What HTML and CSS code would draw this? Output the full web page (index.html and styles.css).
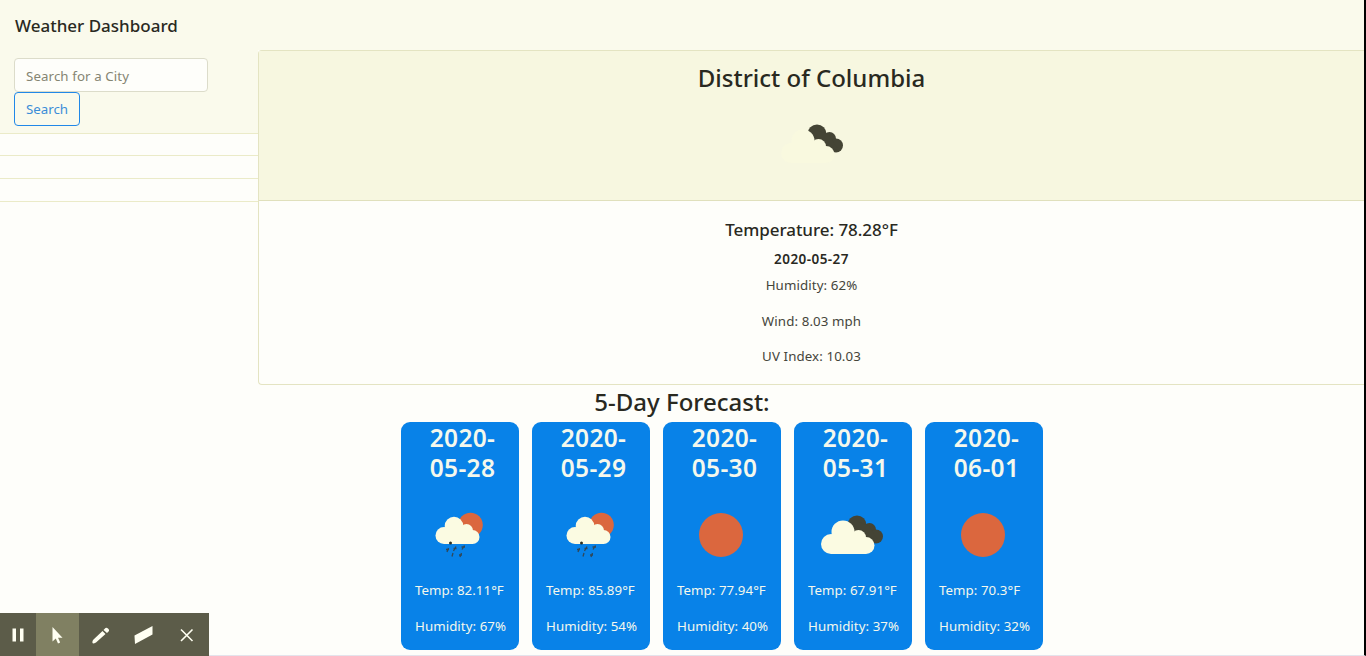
FILE: index.html
```html
<!DOCTYPE html>
<html lang="en">
<head>
<meta charset="utf-8">
<title>Weather Dashboard</title>
<link rel="stylesheet" href="styles.css">
</head>
<body>
<svg class="defs" width="0" height="0">
  <symbol id="clouds" viewBox="0 0 62 40">
    <g class="cloud-dark"><circle cx="36" cy="10" r="9.500"/><circle cx="48.500" cy="14.500" r="6.500"/><circle cx="55" cy="21.500" r="7"/><path d="M36 6l12 5 9 14-7 3-14-6z"/></g>
    <g class="cloud-light"><circle cx="10" cy="29" r="10"/><circle cx="22" cy="17" r="11.500"/><circle cx="37.500" cy="22.500" r="7.500"/><circle cx="45" cy="30.500" r="8.500"/><path d="M10 39V20l12-8 16 8 7 10v9z"/></g>
  </symbol>
  <symbol id="rain" viewBox="0 0 48 46">
    <circle class="sun" cx="35.500" cy="13" r="12.300"/>
    <g class="cloud-light"><circle cx="9" cy="23.500" r="8.500"/><circle cx="19" cy="14" r="9.300"/><circle cx="31.500" cy="18.500" r="6.500"/><circle cx="37.500" cy="25" r="7"/><path d="M9 32V16l10-6 13 7 6 8v7z"/></g>
    <circle class="drop-dot" cx="15.500" cy="31" r="1.500"/>
    <path class="drops" d="M11 37.500h3M13.500 36l-1.500 4M18.500 36.500h3M21 34.500l-2.500 4.500M26.500 35h3.500M29.500 33.500l-2.500 4M18 41l-1 3.500M24 43h3M26.500 41l-1.500 4"/>
  </symbol>
  <symbol id="clear" viewBox="0 0 44 44"><circle class="sun" cx="22" cy="22" r="22"/></symbol>
</svg>
<div class="page">
  <header class="topbar"><h1 class="title">Weather Dashboard</h1></header>
  <div class="content">
    <aside class="sidebar">
      <form class="search">
        <input class="field" type="text" placeholder="Search for a City">
        <button class="search-btn" type="button">Search</button>
      </form>
      <div class="history"></div><div class="history"></div><div class="history"></div>
    </aside>
    <main class="current">
      <div class="current-head">
        <h2 class="city">District of Columbia</h2>
        <svg class="current-icon" viewBox="0 0 62 40"><use href="#clouds"/></svg>
      </div>
      <div class="current-body">
        <h3 class="temperature">Temperature: 78.28°F</h3>
        <div class="date">2020-05-27</div>
        <p class="stat humidity">Humidity: 62%</p>
        <p class="stat wind">Wind: 8.03 mph</p>
        <p class="stat uv">UV Index: 10.03</p>
      </div>
    </main>
  </div>
  <h2 class="forecast-title">5-Day Forecast:</h2>
  <section class="forecast">
    <article class="day"><h3 class="day-date">2020-<br>05-28</h3><div class="day-icon"><svg class="rain"><use href="#rain"/></svg></div><p>Temp: 82.11°F</p><p>Humidity: 67%</p></article>
    <article class="day"><h3 class="day-date">2020-<br>05-29</h3><div class="day-icon"><svg class="rain"><use href="#rain"/></svg></div><p>Temp: 85.89°F</p><p>Humidity: 54%</p></article>
    <article class="day"><h3 class="day-date">2020-<br>05-30</h3><div class="day-icon"><svg class="clear"><use href="#clear"/></svg></div><p>Temp: 77.94°F</p><p>Humidity: 40%</p></article>
    <article class="day"><h3 class="day-date">2020-<br>05-31</h3><div class="day-icon"><svg class="clouds"><use href="#clouds"/></svg></div><p>Temp: 67.91°F</p><p>Humidity: 37%</p></article>
    <article class="day"><h3 class="day-date">2020-<br>06-01</h3><div class="day-icon"><svg class="clear"><use href="#clear"/></svg></div><p>Temp: 70.3°F</p><p>Humidity: 32%</p></article>
  </section>
</div>
<div class="toolbar">
  <svg class="tools" viewBox="0 0 209 43">
    <rect class="active" x="36" width="43" height="43"/>
    <path class="glyph" d="M12.500 15.500h3.500v13h-3.500zM20 15.500h3.500v13H20zM52.500 14v14.500l3.300-3 2.200 5 2.200-1-2.200-4.700h4.500zM93 27l9.500-9 3 3-9.500 8.500q-3 1.500-3.500.5t.500-3zM103.500 17l2-2q1-.8 2.500.5t1 2.500l-2 2z"/>
    <path class="glyph" d="M134.500 22.500l18-9.500v8.500l-17.500 9.500z"/>
    <path class="cross" d="M181 16.500l11.500 11.500M192.500 16.500L181 28"/>
  </svg>
</div>
</body>
</html>
```
FILE: styles.css
```css
* { box-sizing: border-box; }
body { margin: 0; font-family: "Noto Sans", "Open Sans", sans-serif; color: #29291f; background: #fefefa; font-size: 13.3px; overflow: hidden; }
h1, h2, h3, p { margin: 0; font-weight: 500; }
p { font-weight: 400; }
.defs { position: absolute; }
.page { height: 656px; border-right: 2px solid #000; border-bottom: 1px solid #e4e4ec; }
.topbar { height: 50px; padding: 12px 14px 0 15px; background: #fafaec; }
.title { font-size: 17px; line-height: 27px; }
.content { display: flex; height: 335px; }
.sidebar { width: 258px; }
.search { height: 83px; padding: 8px 14px 0; background: #fafaec; display: flex; flex-direction: column; align-items: flex-start; }
.field { width: 194px; height: 34px; padding: 2px 11px 0; border: 1px solid #dcdcca; border-radius: 4px; background: #fefefa; font: inherit; letter-spacing: .1px; }
.field::placeholder { color: #858572; opacity: 1; }
.search-btn { width: 66px; height: 34px; padding: 0; border: 1px solid #2188e8; border-radius: 4px; background: transparent; color: #3b8dd8; font: inherit; }
.history { height: 22px; border-top: 1px solid #ebebc8; }
.history + .history { height: 23px; }
.history:last-child { height: 24px; border-bottom: 1px solid #ebebc8; }
.current { flex: 1; text-align: center; border: 1px solid #e4e4c2; border-right: 0; border-radius: 4px 0 0 4px; }
.current-head { height: 150px; padding-top: 9px; background: #f7f7e0; border-bottom: 1px solid #e0e0bc; display: flex; flex-direction: column; align-items: center; }
.city { font-size: 24px; line-height: 35px; }
.current-icon { --cloud: #f9f9df; width: 62px; height: 40px; margin-top: 29px; }
.temperature { font-size: 17px; line-height: 24px; margin-top: 17px; letter-spacing: -.05px; }
.date { font-weight: 600; font-size: 13.5px; letter-spacing: .45px; line-height: 20px; margin-top: 7px; }
.stat { line-height: 20px; color: #45453a; letter-spacing: .1px; }
.humidity { margin-top: 6px; }
.wind { margin-top: 16px; }
.uv { margin-top: 15px; }
.forecast-title { width: 1364px; height: 37px; text-align: center; font-size: 24px; line-height: 33px; }
.forecast { display: flex; gap: 13px; padding-left: 401px; }
.day { width: 118px; height: 228px; padding: 1px 0 0 14px; border-radius: 9px; background: #0882e8; color: #f4f8ed; }
.day-date { padding-right: 8px; text-align: center; font-size: 24.5px; font-weight: 600; line-height: 30px; letter-spacing: .3px; margin-left: -1px; }
.day-icon { display: flex; justify-content: center; align-items: center; width: 88px; height: 97px; padding-top: 6px; }
.day p { line-height: 20px; height: 36px; white-space: nowrap; letter-spacing: .05px; }
.rain { width: 48px; height: 46px; }
.clear { width: 44px; height: 44px; }
.clouds { width: 62px; height: 40px; margin-left: -1px; }
.sun { fill: #db673e; }
.cloud-light { fill: var(--cloud, #fbfbe2); }
.cloud-dark { fill: #444435; }
.drops { fill: none; stroke: #304859; stroke-width: 1.3; }
.drop-dot { fill: #303020; }
.toolbar { position: absolute; left: 0; top: 613px; width: 209px; height: 43px; background: #5c5c49; }
.tools { display: block; width: 209px; height: 43px; }
.active { fill: #808062; }
.glyph { fill: #fffff2; }
.cross { fill: none; stroke: #fffff2; stroke-width: 1.6; }
```
